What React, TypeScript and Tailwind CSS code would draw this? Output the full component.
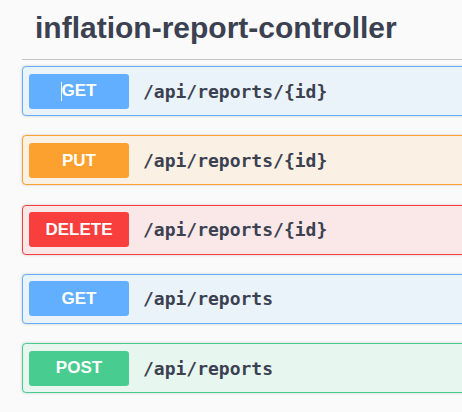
import React from "react";

type Op = { method: string; path: string; border: string; bg: string; badge: string };

const ops: Op[] = [
  { method: "GET", path: "/api/reports/{id}", border: "border-[#61affe]", bg: "bg-[#ebf3fa]", badge: "bg-[#61affe]" },
  { method: "PUT", path: "/api/reports/{id}", border: "border-[#fca130]", bg: "bg-[#fbf0e4]", badge: "bg-[#fca130]" },
  { method: "DELETE", path: "/api/reports/{id}", border: "border-[#f93e3e]", bg: "bg-[#fae7e7]", badge: "bg-[#f93e3e]" },
  { method: "GET", path: "/api/reports", border: "border-[#61affe]", bg: "bg-[#ebf3fa]", badge: "bg-[#61affe]" },
  { method: "POST", path: "/api/reports", border: "border-[#49cc90]", bg: "bg-[#e8f6f0]", badge: "bg-[#49cc90]" },
];

export default function App() {
  return (
    <div className="w-[462px] h-[412px] overflow-hidden bg-[#fafafa] pl-[22px]">
      <div className="w-[480px] border-b border-[#c4c5c9] pl-[13px] pt-[10px] pb-[13px]">
        <h3
          className="text-[30px] leading-[36px] font-bold text-[#3b4151]"
          style={{ fontFamily: '"Liberation Sans", Arial, sans-serif' }}
        >
          inflation-report-controller
        </h3>
      </div>
      <div className="flex flex-col gap-[19.25px] mt-[6px]">
        {ops.map((op, i) => (
          <div
            key={i}
            className={`w-[480px] h-[50px] border rounded-[4px] ${op.border} ${op.bg} shadow-[0_0_3px_rgba(0,0,0,0.19)] flex items-center pl-[6px]`}
          >
            <div
              className={`relative w-[100px] h-[35px] rounded-[3px] ${op.badge} flex items-center justify-center text-white font-bold text-[17px]`}
              style={{ fontFamily: '"Liberation Sans", Arial, sans-serif' }}
            >
              {i === 0 && (
                <span className="absolute left-[32px] top-[8px] w-[1px] h-[19px] bg-white" />
              )}
              {op.method}
            </div>
            <span
              className="ml-[14px] text-[18px] font-bold text-[#3b4151]"
              style={{ fontFamily: '"DejaVu Sans Mono", monospace' }}
            >
              {op.path}
            </span>
          </div>
        ))}
      </div>
    </div>
  );
}
